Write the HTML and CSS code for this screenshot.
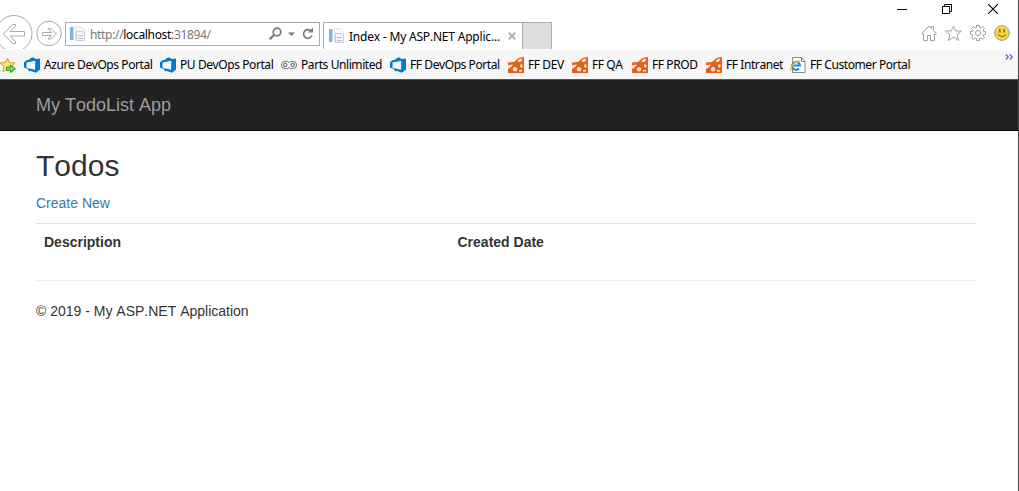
FILE: index.html
```html
<!DOCTYPE html>
<html lang="en">
<head>
<meta charset="utf-8">
<title>Index - My ASP.NET Application</title>
<link rel="stylesheet" href="styles.css">
</head>
<body>
<svg class="defs" aria-hidden="true">
  <symbol id="devops" viewBox="0 0 16 16"><path fill="#0078d7" fill-rule="evenodd" d="M0 5.500 2 3.500 6 2.300V1.500L9 .2 11.500 2 16 1.500V12.500L12 15.800 6 13.800v1.200L3.500 12 0 10.500zM2.500 5.500v5.500l8.700 1.800V3.800z"/></symbol>
  <symbol id="rocket" viewBox="0 0 16 16"><path fill="#e8611a" d="M0 5.500 6 5 10.500 1 16 0v16H0v-4l3.500-2.500L0 9z"/><path fill="#fbeee6" d="M9.500 4l2-2h2.500l-.5 2.200-3 1zM0 8.300l5-.8-1.500 2-3.500 2zM12.500 7l2.200 1-.7 3-2-1.500zM5.500 10.500l2.500-.5 1.500 2.500-1.500 2-2.500-.5-.8-2zM11 13h3v1.500h-3z"/></symbol>
  <symbol id="page" viewBox="0 0 16 16"><path fill="#7ab8df" d="M0 1h3.500v13H0z"/><path fill="#f5f7fb" stroke="#dde3ed" d="M5.500.5h6l3 3v10h-9z"/><path fill="#f4f6fa" stroke="#c6cedb" d="M6.500 5.500h6l2 2v7h-8z"/><path stroke="#b4bfce" d="M8 9.500h5M8 12.500h5"/></symbol>
</svg>
<div class="window">
  <header class="chrome">
    <div class="titlebar">
      <svg width="10" height="10" viewBox="0 0 10 10"><path d="M0 5.500h10" stroke="#000"/></svg>
      <svg width="10" height="10" viewBox="0 0 10 10" fill="none" stroke="#000"><path d="M.5 2.500h7v7h-7zM2.500 2.500v-2h7v7h-2"/></svg>
      <svg class="close" width="10" height="10" viewBox="0 0 10 10"><path d="M0 0l10 10M10 0 0 10" stroke="#000" stroke-width="1.100"/></svg>
    </div>
    <div class="navrow">
      <svg class="back" width="33" height="34" viewBox="0 0 33 34" fill="none" stroke="#aaa"><circle cx="14" cy="18.500" r="18"/><path d="M24.500 16.500H10l5.500-5.200V9.500h-3L3.300 19l9.200 9.500h3v-2l-5.500-5.500h14.500z"/></svg>
      <svg class="forward" width="26" height="34" viewBox="0 0 26 34" fill="none" stroke="#aaa"><circle cx="13" cy="18.500" r="12.300"/><path d="M6.500 17.500h9l-3.500-4h3l5.500 5.500-5.500 5h-3l3.500-3.500h-9z"/></svg>
      <div class="address">
        <svg width="16" height="16"><use href="#page"/></svg>
        <span class="url">http://<b>localhost</b>:31894/</span>
        <svg class="tools" width="45" height="14" viewBox="0 0 45 14" fill="none" stroke="#777"><circle cx="8" cy="5" r="3.800" stroke-width="1.700"/><path d="M5 8 .8 12.200" stroke-width="2.300"/><path fill="#777" stroke="none" d="M19 5.500h7l-3.500 3.500z"/><path stroke-width="1.600" d="M42.500 4.500a4.300 4.300 0 1 0 .4 4"/><path fill="#777" stroke="none" d="M44 .5v5h-5z"/></svg>
      </div>
      <div class="tab">
        <svg width="16" height="16"><use href="#page"/></svg>
        <span class="tabtitle">Index - My ASP.NET Applic...</span>
        <svg width="8" height="8" viewBox="0 0 8 8"><path d="M.7.7l6.600 6.600M7.300.7.7 7.300" stroke="#aaa" stroke-width="1.900"/></svg>
      </div>
      <div class="newtab"></div>
      <div class="commands">
        <svg width="16" height="16" viewBox="0 0 16 16" fill="none" stroke="#a0a0a0"><path d="M.5 8.500 8 1l2.500 2.500v-2h2V5.500l3 3-1 1-1-1v7h-4v-5h-3v5h-4v-7l-1 1z"/></svg>
        <svg width="17" height="16" viewBox="0 0 17 16" fill="none" stroke="#a0a0a0"><path d="M8.500 1l2.200 5h5.800l-4.500 4 1.700 5.500-5.200-3.300-5.200 3.300L5 10 .5 6h5.800z"/></svg>
        <svg width="16" height="16" viewBox="0 0 16 16" fill="none" stroke="#a0a0a0"><circle cx="8" cy="8" r="2.500"/><path d="M6.500 2.500V.5h3v2l1.500.6L12.600 1.500l2 2L13 5l.6 1.500h2v3h-2L13 11l1.600 1.500-2 2L11 13l-1.500.6v2h-3v-2L5 13l-1.600 1.500-2-2L3 11l-.6-1.500h-2v-3h2L3 5 1.400 3.500l2-2L5 3z"/></svg>
        <svg width="16" height="16" viewBox="0 0 16 16"><circle cx="8" cy="8" r="7.400" fill="#fbd53e" stroke="#a9a081"/><path stroke="#756b3c" stroke-width="1.500" d="M5.800 4v3.500M10.200 4v3.500"/><path fill="none" stroke="#756b3c" d="M4 9.500q4 4 8 0"/></svg>
      </div>
    </div>
  </header>
  <nav class="favorites">
    <span class="fav"><svg width="16" height="16" viewBox="0 0 16 16"><path d="M7.500 1l2 4.500 5.500.5-4 3.500 1 5-4.500-2.500L3 14.500l1-5L0 6l5.500-.5z" fill="#ffe479" stroke="#d3a02c"/><path d="M6.500 10h4V8l5 3.700-5 3.800v-2h-4z" fill="#6fd85c" stroke="#2f962b"/></svg></span>
    <a class="fav"><svg width="16" height="16"><use href="#devops"/></svg><span>Azure DevOps Portal</span></a>
    <a class="fav"><svg width="16" height="16"><use href="#devops"/></svg><span>PU DevOps Portal</span></a>
    <a class="fav"><svg width="16" height="16" viewBox="0 0 16 16" fill="none" stroke="#555"><path stroke-width=".8" d="M4 4.400h2.500L8 5.700l1.500-1.300H12a3.600 3.600 0 0 1 0 7.200H9.500L8 10.300l-1.500 1.300H4a3.600 3.600 0 0 1 0-7.200z"/><circle cx="4.300" cy="8" r="1.700"/><circle cx="11.700" cy="8" r="1.700"/></svg><span>Parts Unlimited</span></a>
    <a class="fav"><svg width="16" height="16"><use href="#devops"/></svg><span>FF DevOps Portal</span></a>
    <a class="fav"><svg width="16" height="16"><use href="#rocket"/></svg><span>FF DEV</span></a>
    <a class="fav"><svg width="16" height="16"><use href="#rocket"/></svg><span>FF QA</span></a>
    <a class="fav"><svg width="16" height="16"><use href="#rocket"/></svg><span>FF PROD</span></a>
    <a class="fav"><svg width="16" height="16"><use href="#rocket"/></svg><span>FF Intranet</span></a>
    <a class="fav"><svg width="16" height="16" viewBox="0 0 16 16" fill="none"><path fill="#fff" stroke="#888" d="M2.500.5h9l3.500 4v11H2.500z"/><path stroke="#888" d="M11.500.5v4H15"/><path stroke="#1a8fdc" stroke-width="2.200" d="M2.500 8.500h7.500a3.900 3.900 0 1 0-1 3"/><path stroke="#f2bd20" stroke-width="1.400" d="M1 13.500C-.5 11 5 4 10.500 3.500"/></svg><span>FF Customer Portal</span></a>
    <svg class="more" width="9" height="6" viewBox="0 0 9 6" fill="none" stroke="#6464b4" stroke-width="1.200"><path d="M.8.500 3.300 3 .8 5.500M4.800.5 7.300 3 4.800 5.500"/></svg>
  </nav>
  <div class="navbar"><a class="brand">My TodoList App</a></div>
  <main class="content">
    <h2>Todos</h2>
    <p><a class="create">Create New</a></p>
    <table>
      <tr><th class="desc">Description</th><th>Created Date</th><th></th></tr>
    </table>
    <hr>
    <footer>© 2019 - My ASP.NET Application</footer>
  </main>
</div>
</body>
</html>
```
FILE: styles.css
```css
* { box-sizing: border-box; }
body { margin: 0; background: #fff; }
svg { display: block; flex: none; }
.defs { width: 0; height: 0; position: absolute; }
.window {
  width: 1019px;
  height: 491px;
  overflow: hidden;
  border-right: 1px solid #444;
  font-family: "Liberation Sans", Arial, sans-serif;
  font-kerning: none;
  color: #333;
}
.chrome, .favorites {
  font-family: "Noto Sans", "Open Sans", sans-serif;
  font-size: 12px;
  color: #000;
  white-space: nowrap;
}
.chrome { height: 50px; }
.titlebar {
  height: 15px;
  display: flex;
  justify-content: flex-end;
  gap: 35px;
  padding: 4px 20px 0 0;
}
.close { margin-left: 1px; }
.navrow { height: 34px; display: flex; align-items: flex-start; }
.forward { margin-left: 3px; }
.address {
  width: 255px;
  height: 24px;
  margin: 7px 0 0 3px;
  padding: 0 5px 0 4px;
  border: 1px solid #ababab;
  display: flex;
  align-items: center;
}
.url { margin-left: 4px; color: #777; letter-spacing: -0.33px; }
.url b { font-weight: normal; color: #000; }
.tools { margin-left: auto; }
.tab {
  width: 200px;
  height: 27px;
  margin: 7px 0 0 3px;
  padding: 0 6px 0 5px;
  border: 1px solid #ababab;
  border-bottom: 0;
  display: flex;
  align-items: center;
}
.tabtitle { flex: 1; margin-left: 4px; letter-spacing: -0.2px; }
.newtab {
  width: 29px;
  height: 27px;
  margin-top: 7px;
  background: #ddd;
  border: 1px solid #ababab;
  border-width: 1px 1px 0 0;
}
.commands { display: flex; gap: 8px; margin: 10px 8px 0 auto; }
.favorites {
  height: 30px;
  background: #f6f6f6;
  border-bottom: 1px solid #555;
  display: grid;
  grid-template-columns: 24px 136px 121px 109px 118px 64px 60px 74px 84px 1fr 13px;
  align-items: center;
  letter-spacing: -0.42px;
}
.fav { display: flex; align-items: center; gap: 4px; }
.more { align-self: start; margin-top: 4px; }
.navbar {
  height: 51px;
  padding: 15px 36px;
  background: #222;
  border-bottom: 1px solid #080808;
}
.brand { display: block; font-size: 18px; line-height: 20px; color: #9d9d9d; }
.content { padding: 18px 42px 0 36px; font-size: 14px; line-height: 20px; }
h2 { margin: 0 0 11px; font-size: 30px; line-height: 33px; font-weight: 400; }
p { margin: 0 0 10px; }
.create { color: #337ab7; }
table { width: 100%; border-collapse: collapse; table-layout: fixed; }
th { padding: 8px; text-align: left; border-top: 1px solid #ddd; }
.desc { width: 413.5px; }
hr { margin: 20px 0; border: 0; border-top: 1px solid #eee; }
```
